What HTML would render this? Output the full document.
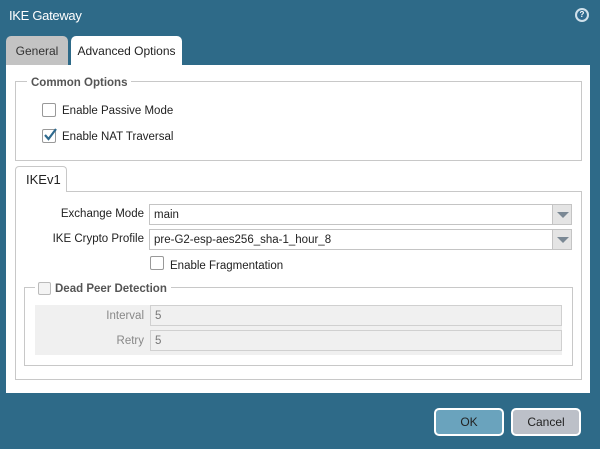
<!DOCTYPE html>
<html><head><style>
*{box-sizing:border-box;margin:0;padding:0}
body{width:600px;height:449px;background:#2e6a88;font-family:"Liberation Sans",sans-serif;font-size:12px;color:#222;position:relative;overflow:hidden}
.a{position:absolute;white-space:nowrap}
.title{left:9px;top:8px;color:#fff;font-size:13px;letter-spacing:-0.3px}
.help{left:575px;top:8px;width:14px;height:14px;border-radius:50%;background:#fff;border:2px solid #cfe0ea}
.help span{position:absolute;left:0;top:0;border-radius:50%;background:#2f6a8e;color:#fff;font-size:8px;font-weight:bold;text-align:center;width:10px;height:10px;line-height:10px}
.tab{top:36px;height:30px;border-radius:5px 5px 0 0;font-size:12px;padding-top:8px;text-align:center}
.panel{left:6px;top:65px;width:584px;height:328px;background:#fff}
.box{border:1px solid #c8c8c8}
.leg{background:#fff;padding:0 4px;font-weight:bold;color:#555;font-size:11.5px}
.cb{width:14px;height:14px;border:1px solid #999;border-radius:2px;background:#fff}
.lbl{font-size:11.5px}
.sel{height:21px;border:1px solid #c4c4c4;background:#fff;padding:4px 4px 3px;font-size:11.5px}
.arr{width:20px;height:21px;border:1px solid #c4c4c4;background:#e4e4e4}
.arr:after{content:"";position:absolute;left:4px;top:7px;border-left:6px solid transparent;border-right:6px solid transparent;border-top:6px solid #7a8894}
.inp{height:21px;border:1px solid #d0d0d0;background:#f0f0f0;padding:4px 4px 3px;color:#777;font-size:11.5px}
.btn{top:408px;width:70px;height:28px;border:2px solid #fff;border-radius:5px;font-size:12px;text-align:center;line-height:24px}
</style></head><body>
<div class="a title">IKE Gateway</div>
<div class="a help"><span>?</span></div>
<div class="a tab" style="left:6px;width:62px;background:#c3c3c3;color:#333">General</div>
<div class="a tab" style="left:71px;width:111px;background:#fff;color:#222">Advanced Options</div>
<div class="a panel"></div>
<div class="a box" style="left:15px;top:81px;width:567px;height:80px"></div>
<div class="a leg" style="left:27px;top:77px">Common Options</div>
<div class="a cb" style="left:42px;top:103px"></div>
<div class="a lbl" style="left:62px;top:105px">Enable Passive Mode</div>
<div class="a cb" style="left:42px;top:129px"></div>
<svg class="a" style="left:42px;top:126px" width="16" height="16"><path d="M3 9 L6.5 13 L14 3" stroke="#2f6a8e" stroke-width="2.2" fill="none"/></svg>
<div class="a lbl" style="left:62px;top:131px">Enable NAT Traversal</div>
<div class="a box" style="left:15px;top:191px;width:567px;height:189px"></div>
<div class="a" style="left:15px;top:166px;width:52px;height:26px;border:1px solid #c8c8c8;border-bottom:none;border-radius:4px 4px 0 0;background:#fff;font-size:13px;padding:5px 0 0 10px">IKEv1</div>
<div class="a lbl" style="left:40px;top:208px;width:104px;text-align:right">Exchange Mode</div>
<div class="a sel" style="left:149px;top:204px;width:405px">main</div>
<div class="a arr" style="left:552px;top:204px"></div>
<div class="a lbl" style="left:20px;top:233px;width:124px;text-align:right">IKE Crypto Profile</div>
<div class="a sel" style="left:149px;top:229px;width:405px">pre-G2-esp-aes256_sha-1_hour_8</div>
<div class="a arr" style="left:552px;top:229px"></div>
<div class="a cb" style="left:150px;top:256px"></div>
<div class="a lbl" style="left:170px;top:260px">Enable Fragmentation</div>
<div class="a box" style="left:24px;top:287px;width:549px;height:79px"></div>
<div class="a leg" style="left:35px;top:282px;padding-left:3px"><span class="cb" style="display:inline-block;vertical-align:-3px;width:13px;height:13px;border-color:#bbb;background:#f4f4f4;margin-right:4px"></span>Dead Peer Detection</div>
<div class="a" style="left:35px;top:305px;width:527px;height:50px;background:#f0f0f0"></div>
<div class="a lbl" style="left:60px;top:310px;width:84px;text-align:right;color:#888">Interval</div>
<div class="a inp" style="left:150px;top:305px;width:412px">5</div>
<div class="a lbl" style="left:60px;top:335px;width:84px;text-align:right;color:#888">Retry</div>
<div class="a inp" style="left:150px;top:330px;width:412px">5</div>
<div class="a btn" style="left:434px;background:#6aa3bd;color:#222">OK</div>
<div class="a btn" style="left:511px;background:#bcc0c8;color:#222">Cancel</div>
</body></html>
